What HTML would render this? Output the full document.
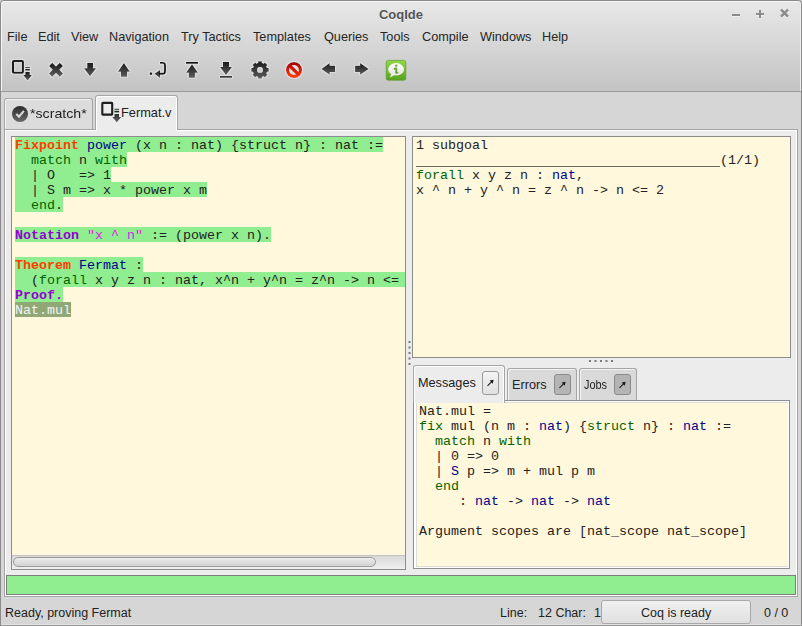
<!DOCTYPE html>
<html><head><meta charset="utf-8">
<style>
*{box-sizing:border-box;margin:0;padding:0}
html,body{width:802px;height:626px;overflow:hidden;background:#3c4650}
body{position:relative;font-family:"Liberation Sans",sans-serif;font-size:12.5px;color:#2f2f2f}
.a{position:absolute}
#win{left:0;top:0;width:802px;height:626px;background:#d6d6d6;border-radius:4px 4px 0 0;overflow:hidden}
#hdr{left:0;top:0;width:802px;height:92px;background:linear-gradient(#e8e8e8 0px,#dcdcdc 30px,#d2d2d2 55px,#c3c3c3 90px);border:1px solid #8a8a8a;border-bottom-color:#9a9a9a;box-shadow:inset 1px 1px 0 #f6f6f6,inset -1px 0 0 #eeeeee;border-radius:4px 4px 0 0}
.title{left:0;width:802px;top:7px;line-height:15px;text-align:center;font-weight:bold;font-size:13px;color:#555;text-shadow:0 1px 0 rgba(255,255,255,0.7)}
.menu{top:30px;font-size:12.7px;color:#262626;white-space:nowrap;line-height:15px}
.ui{font-size:12.5px;color:#222;white-space:nowrap;line-height:15px}
.mono{font-family:"Liberation Mono",monospace;font-size:13.33px;line-height:15px;height:15px;white-space:pre;color:#222}
.mono>span,.mono{display:block}
.mono span{display:inline}
.frame{border:1px solid #8c8c8c;background:#fff8dc}
.kw{color:#ff3f00;font-weight:bold}
.pr{color:#9400d3;font-weight:bold}
.id{color:#00008b}
.gk{color:#006400}
.st{color:#e21ae6}
.bg{background:#90ee90}
.sel{background:#8fa876}
.selt{color:#f4f4f4}
.tab{border:1px solid #a6a6a6;border-bottom:none;border-radius:3px 3px 0 0}
</style></head><body>
<div class="a" style="left:795px;top:0;width:7px;height:7px;background:#c4c4c4"></div>
<div class="a" style="left:0;top:0;width:7px;height:7px;background:#c8c8c8"></div>
<div class="a" style="left:0;top:3px;width:1px;height:2px;background:#2a3a50"></div>
<div id="win" class="a">
  <div id="hdr" class="a"></div>
  <div class="a title">CoqIde</div>
  <!-- window controls -->
  <div class="a" style="left:732px;top:14px;width:8px;height:2px;background:#8a8a8a;box-shadow:0 1px 0 rgba(255,255,255,.6)"></div>
  <div class="a" style="left:756px;top:13px;width:8px;height:2px;background:#8a8a8a;box-shadow:0 1px 0 rgba(255,255,255,.6)"></div>
  <div class="a" style="left:759px;top:10px;width:2px;height:8px;background:#8a8a8a;box-shadow:0 1px 0 rgba(255,255,255,.6)"></div>
  <svg class="a" style="left:779px;top:8px" width="11" height="12" viewBox="0 0 11 12"><path d="M2 2.6L9 9.6M9 2.6L2 9.6" stroke="#fff" stroke-opacity=".5" stroke-width="2.3"/><path d="M2 1.6L9 8.6M9 1.6L2 8.6" stroke="#8a8a8a" stroke-width="2.3"/></svg>

  <!-- menu -->
  <div class="a menu" style="left:7px">File</div>
  <div class="a menu" style="left:38px">Edit</div>
  <div class="a menu" style="left:71px">View</div>
  <div class="a menu" style="left:109px">Navigation</div>
  <div class="a menu" style="left:181px">Try Tactics</div>
  <div class="a menu" style="left:253px">Templates</div>
  <div class="a menu" style="left:324px">Queries</div>
  <div class="a menu" style="left:380px">Tools</div>
  <div class="a menu" style="left:422px">Compile</div>
  <div class="a menu" style="left:480px">Windows</div>
  <div class="a menu" style="left:542px">Help</div>

  <!-- toolbar -->
  <svg class="a" style="left:0;top:0" width="802" height="130" viewBox="0 0 802 130">
    <defs>
      <linearGradient id="dg" x1="0" y1="0" x2="0" y2="1"><stop offset="0" stop-color="#1a1a1a"/><stop offset="1" stop-color="#5c5c5c"/></linearGradient>
      <linearGradient id="rg" x1="0" y1="0" x2="0" y2="1"><stop offset="0" stop-color="#a80000"/><stop offset="1" stop-color="#ff3c00"/></linearGradient><linearGradient id="rg2" gradientUnits="userSpaceOnUse" x1="0" y1="62" x2="0" y2="78"><stop offset="0" stop-color="#b00000"/><stop offset="1" stop-color="#f83400"/></linearGradient>
      <linearGradient id="gg" x1="0" y1="0" x2="0" y2="1"><stop offset="0" stop-color="#92d845"/><stop offset="1" stop-color="#56a21e"/></linearGradient>
      <linearGradient id="cg" x1="0" y1="0" x2="0" y2="1"><stop offset="0" stop-color="#2a2a2a"/><stop offset="1" stop-color="#6a6a6a"/></linearGradient>
      <filter id="halo" x="-20%" y="-20%" width="140%" height="140%"><feMorphology operator="dilate" radius="0.8" in="SourceAlpha" result="d"/><feFlood flood-color="#fff" flood-opacity="0.32"/><feComposite in2="d" operator="in"/><feMerge><feMergeNode/><feMergeNode in="SourceGraphic"/></feMerge></filter>
    </defs>
    <g filter="url(#halo)">
      <!-- 1 doc -->
      <rect x="13" y="61" width="9.9" height="11.7" rx="0.6" fill="none" stroke="#1e1e1e" stroke-width="2.1"/>
      <rect x="25.2" y="67" width="4.7" height="0.9" fill="#222"/>
      <rect x="25.2" y="69" width="4.7" height="1.6" fill="#222"/>
      <path d="M25.3 72.1H29.8V75.1H32L27.6 80.4L23.2 75.1H25.3Z" fill="url(#dg)"/>
      <!-- 2 X -->
      <path d="M50.6 64.4L61.4 75.2M61.4 64.4L50.6 75.2" stroke="url(#dg)" stroke-width="4.6"/>
      <!-- 3 down -->
      <path d="M87.2 62.9H93V68.3H96.1L90 76.3L84 68.3H87.2Z" fill="url(#dg)"/>
      <!-- 4 up -->
      <path d="M123.9 63.1L129.9 71.7H127V76.7H121V71.7H117.9Z" fill="url(#dg)"/>
      <!-- 5 return -->
      <circle cx="150.9" cy="73.7" r="1.4" fill="#222"/>
      <path d="M154.5 73.7L160 70V77.9Z" fill="url(#dg)"/>
      <path d="M159 73.7H162.8Q165 73.7 165 71.5V65.1Q165 62.9 162.8 62.9H160" fill="none" stroke="#141414" stroke-width="1.9"/>
      <!-- 6 top -->
      <rect x="186" y="62" width="12" height="1.8" fill="#111"/>
      <path d="M192 64.2L198 72.8H194.9V77.7H188.9V72.8H186Z" fill="url(#dg)"/>
      <!-- 7 bottom -->
      <path d="M223 62H229V67H232L226 75.1L220 67H223Z" fill="url(#dg)"/>
      <rect x="220" y="76" width="12" height="1.8" fill="#3a3a3a"/>
      <!-- 8 gear -->
      <path transform="translate(260 69.9)" fill="url(#dg)" fill-rule="evenodd" d="M-1.85 -6.96L-1.85 -8.71L1.85 -8.71L1.85 -6.96L2.31 -6.82L2.76 -6.65L3.19 -6.45L3.61 -6.23L4.85 -7.46L7.46 -4.85L6.23 -3.61L6.45 -3.19L6.65 -2.76L6.82 -2.31L6.96 -1.85L8.71 -1.85L8.71 1.85L6.96 1.85L6.82 2.31L6.65 2.76L6.45 3.19L6.23 3.61L7.46 4.85L4.85 7.46L3.61 6.23L3.19 6.45L2.76 6.65L2.31 6.82L1.85 6.96L1.85 8.71L-1.85 8.71L-1.85 6.96L-2.31 6.82L-2.76 6.65L-3.19 6.45L-3.61 6.23L-4.85 7.46L-7.46 4.85L-6.23 3.61L-6.45 3.19L-6.65 2.76L-6.82 2.31L-6.96 1.85L-8.71 1.85L-8.71 -1.85L-6.96 -1.85L-6.82 -2.31L-6.65 -2.76L-6.45 -3.19L-6.23 -3.61L-7.46 -4.85L-4.85 -7.46L-3.61 -6.23L-3.19 -6.45L-2.76 -6.65L-2.31 -6.82Z M2.9 0A2.9 2.9 0 1 0 -2.9 0A2.9 2.9 0 1 0 2.9 0Z"/>
      <!-- 9 stop -->
      <circle cx="294" cy="70" r="6.5" fill="#dde0e0" stroke="url(#rg)" stroke-width="3.1"/>
      <path d="M289.3 65.3L298.7 74.7" stroke="url(#rg2)" stroke-width="3.3"/>
      <!-- 10 left -->
      <path d="M321.4 68.9L329.7 63.1V65.7H335V72.1H329.7V74.7Z" fill="url(#dg)"/>
      <!-- 11 right -->
      <path d="M368.7 68.9L360.1 63.1V65.7H355.1V72.1H360.1V74.7Z" fill="url(#dg)"/>
    </g>
    <!-- 12 info -->
    <linearGradient id="bub" x1="0" y1="0" x2="0" y2="1"><stop offset="0" stop-color="#ffffff"/><stop offset="1" stop-color="#e4e4e4"/></linearGradient>
    <rect x="386.2" y="60.4" width="19.6" height="19.8" rx="2" fill="url(#gg)" stroke="#5d9d2c" stroke-width="0.7"/>
    <ellipse cx="396.1" cy="69.3" rx="7.9" ry="6.2" fill="url(#bub)"/>
    <path d="M391.6 73.6L389.8 77.8L395.2 74.6Z" fill="#f0f0f0"/>
    <circle cx="396.3" cy="65.7" r="1.15" fill="#5ea624"/>
    <path d="M394.4 68.9Q396.6 67.4 396.5 69.6L396 72.2Q396 73.4 397.6 72.6" fill="none" stroke="#5ea624" stroke-width="1.7" stroke-linecap="round"/>
  </svg>

  <!-- notebook tabs -->
  <div class="a tab" style="left:4px;top:98px;width:89px;height:31px;background:#dcdcdc;box-shadow:inset 1px 1px 0 #f4f4f4"></div>
  <div class="a tab" style="left:95px;top:95px;width:83px;height:36px;background:#ececec;box-shadow:inset 1px 1px 0 #fff,inset -1px 0 0 #fff"></div>
  <svg class="a" style="left:0;top:0" width="200" height="130" viewBox="0 0 200 130">
    <defs><linearGradient id="cg2" x1="0" y1="0" x2="0" y2="1"><stop offset="0" stop-color="#2a2a2a"/><stop offset="1" stop-color="#6a6a6a"/></linearGradient></defs>
    <circle cx="20" cy="114" r="8" fill="url(#cg2)"/>
    <path d="M16.3 114L19 116.7L23.9 110.9" fill="none" stroke="#dcdcdc" stroke-width="2"/>
    <rect x="102.3" y="102.9" width="9.9" height="11.7" rx="0.6" fill="none" stroke="#1e1e1e" stroke-width="2.1"/>
    <rect x="114.4" y="108.8" width="4.7" height="0.9" fill="#222"/>
    <rect x="114.4" y="110.8" width="4.7" height="1.6" fill="#222"/>
    <path d="M114.5 113.9H119V116.9H121.2L116.8 122.2L112.4 116.9H114.5Z" fill="url(#cg2)"/>
  </svg>
  <div class="a ui" style="left:30px;top:106px;font-size:13.5px;transform:scaleX(1.05);transform-origin:0 0">*scratch*</div>
  <div class="a ui" style="left:121px;top:105px;font-size:12.8px">Fermat.v</div>

  <!-- notebook page -->
  <div class="a" style="left:4px;top:129px;width:794px;height:468px;border:1px solid #a4a4a4;background:#ececec;box-shadow:inset 1px 1px 0 #fff,inset -1px -1px 0 #fff"></div>
  <div class="a" style="left:96px;top:128px;width:81px;height:3px;background:#ececec;box-shadow:inset 1px 0 0 #fff,inset -1px 0 0 #fff"></div>

  <!-- left editor -->
  <div class="a frame" style="left:11px;top:136px;width:395px;height:434px;overflow:hidden">
    <div class="a" style="left:-12px;top:-137px;width:802px;height:626px">
<div class="a bg" style="left:15px;top:137px;width:368px;height:15px"></div>
<div class="a mono" style="left:15px;top:138px"><span class="kw">Fixpoint</span> <span class="id">power</span> (x n : nat) {struct n} : nat :=</div>
<div class="a bg" style="left:15px;top:152px;width:112px;height:15px"></div>
<div class="a mono" style="left:15px;top:153px">  <span class="gk">match</span> n <span class="gk">with</span></div>
<div class="a bg" style="left:15px;top:167px;width:96px;height:15px"></div>
<div class="a mono" style="left:15px;top:168px">  | O   =&gt; 1</div>
<div class="a bg" style="left:15px;top:182px;width:192px;height:15px"></div>
<div class="a mono" style="left:15px;top:183px">  | S m =&gt; x * power x m</div>
<div class="a bg" style="left:15px;top:197px;width:48px;height:15px"></div>
<div class="a mono" style="left:15px;top:198px">  <span class="gk">end</span>.</div>
<div class="a bg" style="left:15px;top:227px;width:256px;height:15px"></div>
<div class="a mono" style="left:15px;top:228px"><span class="pr">Notation</span> <span class="st">"x ^ n"</span> := (power x n).</div>
<div class="a bg" style="left:15px;top:257px;width:128px;height:15px"></div>
<div class="a mono" style="left:15px;top:258px"><span class="kw">Theorem</span> <span class="id">Fermat</span> :</div>
<div class="a bg" style="left:15px;top:272px;width:416px;height:15px"></div>
<div class="a mono" style="left:15px;top:273px">  (<span class="gk">forall</span> x y z n : nat, x^n + y^n = z^n -&gt; n &lt;= 2).</div>
<div class="a bg" style="left:15px;top:287px;width:48px;height:15px"></div>
<div class="a mono" style="left:15px;top:288px"><span class="pr">Proof.</span></div>
<div class="a sel" style="left:15px;top:302px;width:56px;height:15px"></div>
<div class="a mono selt" style="left:15px;top:303px">Nat.mul</div>

    </div>
  </div>
  <!-- h scrollbar -->
  <div class="a" style="left:12px;top:555px;width:393px;height:14px;background:linear-gradient(#d8d8d8,#f0f0f0);border-top:1px solid #c4c4c4"></div>
  <div class="a" style="left:13px;top:557px;width:363px;height:10px;border:1px solid #9c9c9c;border-radius:5px;background:linear-gradient(#ececec,#d2d2d2)"></div>

  <!-- goals -->
  <div class="a frame" style="left:412px;top:136px;width:379px;height:222px"></div>
<div class="a mono" style="left:416px;top:138px">1 subgoal</div>
<div class="a mono" style="left:416px;top:153px">                                      (1/1)</div>
<div class="a mono" style="left:416px;top:168px"><span class="gk">forall</span> x y z n : <span class="id">nat</span>,</div>
<div class="a mono" style="left:416px;top:183px">x ^ n + y ^ n = z ^ n -&gt; n &lt;= 2</div>
<div class="a" style="left:416px;top:166px;width:304px;height:1px;background:#6f6a62"></div>


  <!-- pane handles -->
  <svg class="a" style="left:0;top:0" width="802" height="400" viewBox="0 0 802 400">
    <g fill="#7a7a7a">
      <rect x="408.5" y="341" width="2" height="2"/><rect x="408.5" y="346.5" width="2" height="2"/><rect x="408.5" y="352" width="2" height="2"/><rect x="408.5" y="357.5" width="2" height="2"/><rect x="408.5" y="363" width="2" height="2"/>
      <rect x="589" y="360" width="2" height="2"/><rect x="594.5" y="360" width="2" height="2"/><rect x="600" y="360" width="2" height="2"/><rect x="605.5" y="360" width="2" height="2"/><rect x="611" y="360" width="2" height="2"/>
    </g>
  </svg>

  <!-- message tabs -->
  <div class="a tab" style="left:507px;top:368px;width:70px;height:33px;background:#d9d9d9;box-shadow:inset 1px 1px 0 #f4f4f4"></div>
  <div class="a tab" style="left:579px;top:368px;width:58px;height:33px;background:#d9d9d9;box-shadow:inset 1px 1px 0 #f4f4f4"></div>
  <!-- messages page -->
  <div class="a" style="left:413px;top:400px;width:377px;height:169px;border:1px solid #8e8e8e;background:#fff;"></div>
  <div class="a" style="left:416px;top:402px;width:372px;height:165px;background:#dcdcdc"></div>
  <div class="a" style="left:417px;top:403px;width:371px;height:163px;background:#fff8dc"></div>
  <div class="a tab" style="left:413px;top:365px;width:92px;height:38px;background:#ececec;box-shadow:inset 1px 1px 0 #fff,inset -1px 0 0 #fff"></div>
  <div class="a ui" style="left:418px;top:376px;font-size:12.7px">Messages</div>
  <div class="a ui" style="left:512px;top:378px;font-size:12.7px">Errors</div>
  <div class="a ui" style="left:584px;top:378px;font-size:12.7px;transform:scaleX(0.86);transform-origin:0 0">Jobs</div>
  <div class="a" style="left:482px;top:371px;width:17px;height:24px;border:1px solid #9a9a9a;border-radius:3px;background:linear-gradient(#f4f4f4,#e0e0e0)"></div>
  <div class="a" style="left:554px;top:374px;width:17px;height:21px;border:1px solid #8a8a8a;border-radius:3px;background:#b4b4b4"></div>
  <div class="a" style="left:614px;top:374px;width:17px;height:21px;border:1px solid #8a8a8a;border-radius:3px;background:#b4b4b4"></div>
  <svg class="a" style="left:0;top:0" width="802" height="400" viewBox="0 0 802 400">
    <g stroke="#1a1a1a" stroke-width="1.1" fill="#1a1a1a">
      <path d="M487.5 385.8L492 381.3" /><path d="M493.6 379.8L489.6 380.6L492.8 383.8Z" stroke="none"/>
      <path d="M559.5 387.8L564 383.3" /><path d="M565.6 381.8L561.6 382.6L564.8 385.8Z" stroke="none"/>
      <path d="M619.5 387.8L624 383.3" /><path d="M625.6 381.8L621.6 382.6L624.8 385.8Z" stroke="none"/>
    </g>
  </svg>
<div class="a mono" style="left:419px;top:404px">Nat.mul =</div>
<div class="a mono" style="left:419px;top:419px"><span class="gk">fix</span> mul (n m : <span class="id">nat</span>) {<span class="gk">struct</span> n} : <span class="id">nat</span> :=</div>
<div class="a mono" style="left:419px;top:434px">  <span class="gk">match</span> n <span class="gk">with</span></div>
<div class="a mono" style="left:419px;top:449px">  | 0 =&gt; 0</div>
<div class="a mono" style="left:419px;top:464px">  | <span class="id">S</span> p =&gt; m + mul p m</div>
<div class="a mono" style="left:419px;top:479px">  <span class="gk">end</span></div>
<div class="a mono" style="left:419px;top:494px">     : <span class="id">nat</span> -&gt; <span class="id">nat</span> -&gt; <span class="id">nat</span></div>
<div class="a mono" style="left:419px;top:524px">Argument scopes are [nat_scope nat_scope]</div>


  <!-- progress bar -->
  <div class="a" style="left:6px;top:575px;width:790px;height:20px;border:1px solid #7d7d7d;background:#90ee90"></div>

  <!-- status -->
  <div class="a ui" style="left:5px;top:606px;font-size:12.5px">Ready, proving Fermat</div>
  <div class="a ui" style="left:500px;top:606px">Line:</div>
  <div class="a ui" style="left:538px;top:606px">12 Char:</div>
  <div class="a ui" style="left:594px;top:606px">1</div>
  <div class="a" style="left:601px;top:600px;width:150px;height:24px;border:1px solid #a8a8a8;border-radius:3px;background:linear-gradient(#f0f0f0,#e0e0e0)"></div>
  <div class="a ui" style="left:641px;top:606px">Coq is ready</div>
  <div class="a ui" style="left:764px;top:606px">0 / 0</div>

  <!-- window borders -->
  <div class="a" style="left:0;top:624px;width:802px;height:1px;background:#e2e2e2"></div>
  <div class="a" style="left:0;top:625px;width:802px;height:1px;background:#9a9a9a"></div>
  <div class="a" style="left:0;top:4px;width:1px;height:622px;background:#8a8a8a"></div>
  <div class="a" style="left:801px;top:4px;width:1px;height:622px;background:#8a8a8a"></div>
</div>
</body></html>
